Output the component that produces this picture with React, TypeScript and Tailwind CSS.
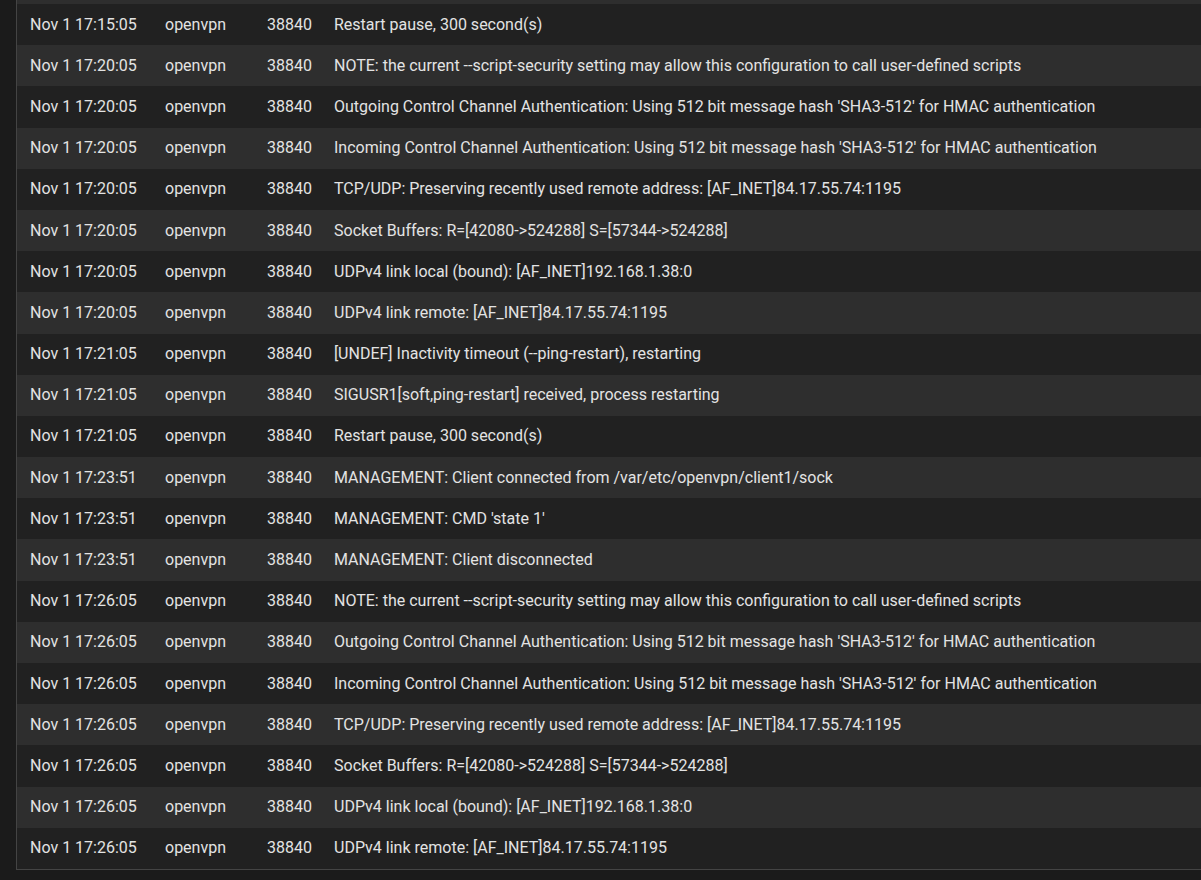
const ROWS: [string, string][] = [
  ['Nov 1 17:15:05', 'Restart pause, 300 second(s)'],
  ['Nov 1 17:20:05', 'NOTE: the current --script-security setting may allow this configuration to call user-defined scripts'],
  ['Nov 1 17:20:05', "Outgoing Control Channel Authentication: Using 512 bit message hash 'SHA3-512' for HMAC authentication"],
  ['Nov 1 17:20:05', "Incoming Control Channel Authentication: Using 512 bit message hash 'SHA3-512' for HMAC authentication"],
  ['Nov 1 17:20:05', 'TCP/UDP: Preserving recently used remote address: [AF_INET]84.17.55.74:1195'],
  ['Nov 1 17:20:05', 'Socket Buffers: R=[42080->524288] S=[57344->524288]'],
  ['Nov 1 17:20:05', 'UDPv4 link local (bound): [AF_INET]192.168.1.38:0'],
  ['Nov 1 17:20:05', 'UDPv4 link remote: [AF_INET]84.17.55.74:1195'],
  ['Nov 1 17:21:05', '[UNDEF] Inactivity timeout (--ping-restart), restarting'],
  ['Nov 1 17:21:05', 'SIGUSR1[soft,ping-restart] received, process restarting'],
  ['Nov 1 17:21:05', 'Restart pause, 300 second(s)'],
  ['Nov 1 17:23:51', 'MANAGEMENT: Client connected from /var/etc/openvpn/client1/sock'],
  ['Nov 1 17:23:51', "MANAGEMENT: CMD 'state 1'"],
  ['Nov 1 17:23:51', 'MANAGEMENT: Client disconnected'],
  ['Nov 1 17:26:05', 'NOTE: the current --script-security setting may allow this configuration to call user-defined scripts'],
  ['Nov 1 17:26:05', "Outgoing Control Channel Authentication: Using 512 bit message hash 'SHA3-512' for HMAC authentication"],
  ['Nov 1 17:26:05', "Incoming Control Channel Authentication: Using 512 bit message hash 'SHA3-512' for HMAC authentication"],
  ['Nov 1 17:26:05', 'TCP/UDP: Preserving recently used remote address: [AF_INET]84.17.55.74:1195'],
  ['Nov 1 17:26:05', 'Socket Buffers: R=[42080->524288] S=[57344->524288]'],
  ['Nov 1 17:26:05', 'UDPv4 link local (bound): [AF_INET]192.168.1.38:0'],
  ['Nov 1 17:26:05', 'UDPv4 link remote: [AF_INET]84.17.55.74:1195'],
]

export default function App() {
  return (
    <div className="h-[880px] w-[1201px] overflow-hidden bg-[#1b1b1b] pl-4 font-[Roboto,Arial,sans-serif] text-[16px] text-[#e3e3e3]">
      <div className="border-b border-l border-[#444]">
        <div className="h-1 bg-[#2e2e2e]" />
        {ROWS.map(([date, msg], i) => (
          <div
            key={i}
            className={`flex h-[41.2px] items-center whitespace-nowrap ${i % 2 === 0 ? 'bg-[#212121]' : 'bg-[#2e2e2e]'}`}
          >
            <span className="w-[148px] shrink-0 pl-[13px]">{date}</span>
            <span className="w-[102px] shrink-0">openvpn</span>
            <span className="w-[67px] shrink-0">38840</span>
            <span>{msg}</span>
          </div>
        ))}
      </div>
    </div>
  )
}
